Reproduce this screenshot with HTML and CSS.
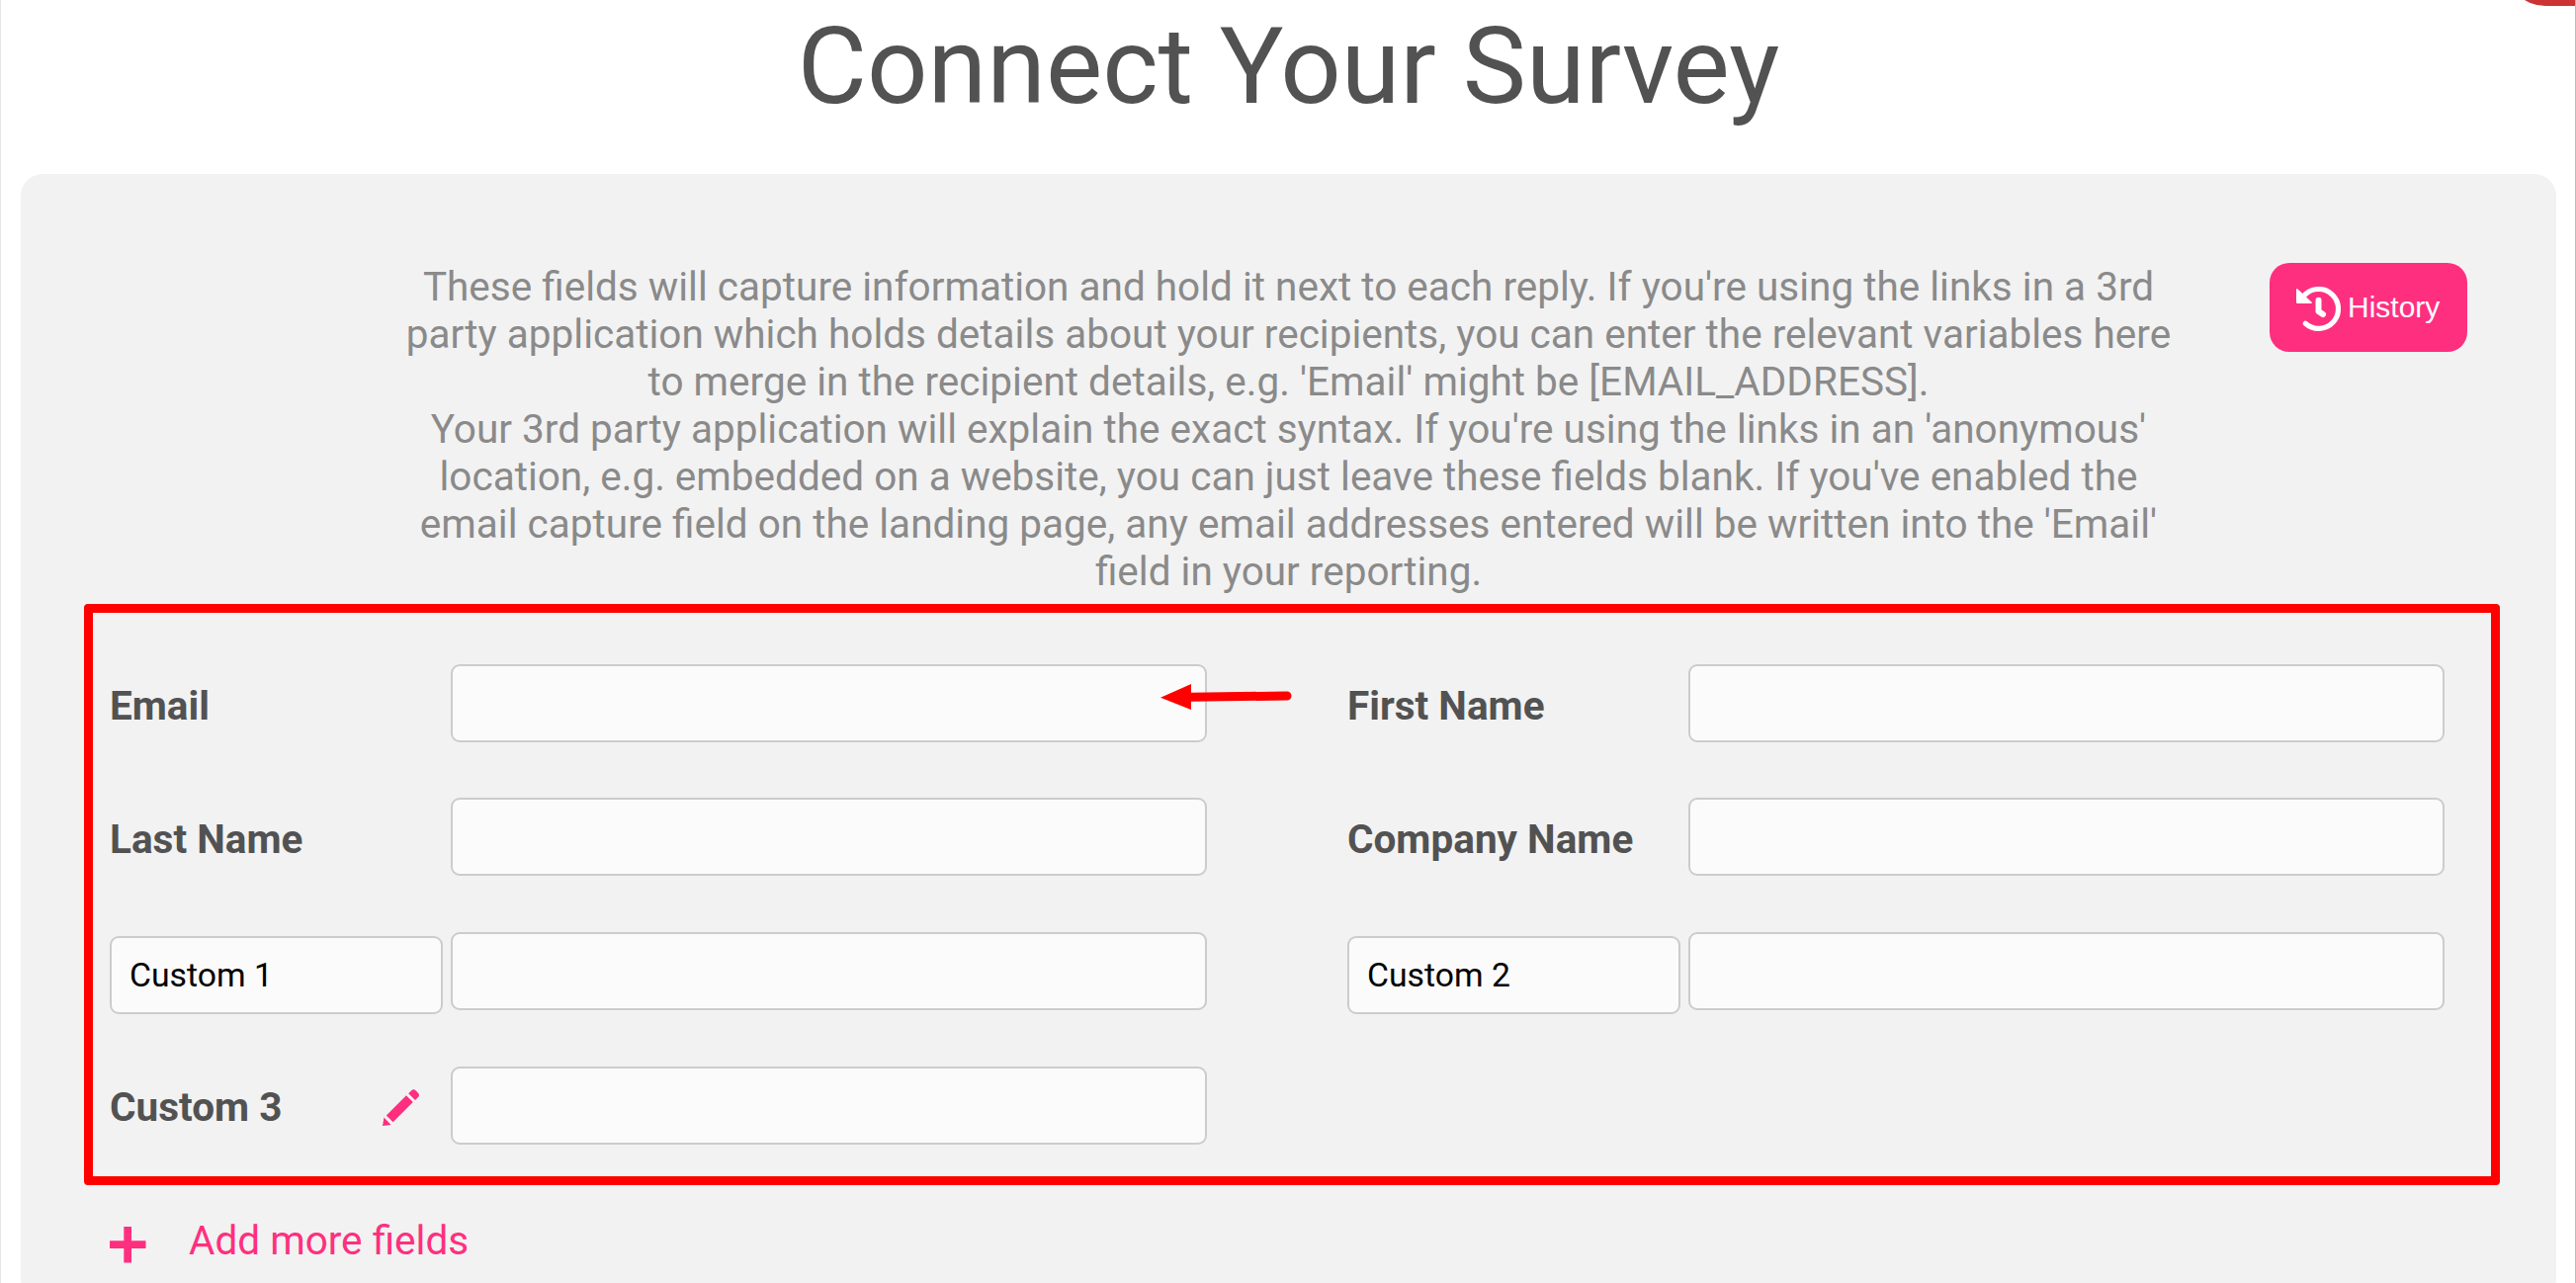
FILE: index.html
```html
<!DOCTYPE html>
<html lang="en">
<head>
<meta charset="utf-8">
<title>Connect Your Survey</title>
<link rel="stylesheet" href="styles.css">
</head>
<body>
<main class="page">
  <div class="corner-badge"></div>
  <h1 class="title">Connect Your Survey</h1>
  <section class="panel">
    <div class="intro">
      <p class="intro-text">These fields will capture information and hold it next to each reply. If you're using the links in a 3rd<br>party application which holds details about your recipients, you can enter the relevant variables here<br>to merge in the recipient details, e.g. 'Email' might be [EMAIL_ADDRESS].<br>Your 3rd party application will explain the exact syntax. If you're using the links in an 'anonymous'<br>location, e.g. embedded on a website, you can just leave these fields blank. If you've enabled the<br>email capture field on the landing page, any email addresses entered will be written into the 'Email'<br>field in your reporting.</p>
      <button class="history" type="button">
        <svg class="history-icon" viewBox="0 0 45 45"><path class="ring" d="M8.5 8.4A19.9 19.9 0 1 1 9.3 37.2"/><path class="head" d="M0 3.2Q0 1.2 1.5 2.6L15.4 15.6Q16.8 17 14.8 17H1.2Q0 17 0 15.8Z"/><path class="hand" d="M22.5 13.8V25L27 28"/></svg>
        <span>History</span>
      </button>
    </div>
    <form class="fields">
      <div class="field"><label class="label" for="f1">Email</label><input class="input" id="f1"></div>
      <div class="field"><label class="label" for="f2">First Name</label><input class="input" id="f2"></div>
      <div class="field"><label class="label" for="f3">Last Name</label><input class="input" id="f3"></div>
      <div class="field"><label class="label" for="f4">Company Name</label><input class="input" id="f4"></div>
      <div class="field"><input class="input name" value="Custom 1"><input class="input"></div>
      <div class="field"><input class="input name" value="Custom 2"><input class="input"></div>
      <div class="field">
        <label class="label" for="f7">Custom 3
          <svg class="pencil" viewBox="0 0 37 37"><path d="M0 37 1.5 28.5 8.5 36ZM3.8 26.4 24 6.2 30.8 13 10.6 33.2ZM26.2 4.2 29 1.4Q31.4-1 33.8 1.4L35.8 3.4Q38.2 5.8 35.8 8.2L33 11Z"/></svg>
        </label><input class="input" id="f7">
      </div>
    </form>
    <a class="add"><svg class="plus" viewBox="0 0 37 37"><path d="M14.3 0H22V14.3H36.5V22H22V36.5H14.3V22H0V14.3H14.3Z"/></svg><span>Add more fields</span></a>
  </section>
  <div class="highlight"></div>
  <svg class="arrow" viewBox="0 0 134 28"><path class="shaft" d="M30 14.2 128 13"/><path class="tip" d="M0 14.8 31 1V27Z"/></svg>
</main>
</body>
</html>
```
FILE: styles.css
```css
* { box-sizing: border-box; }

body {
  margin: 0;
  background: #fff;
  font-family: Roboto, "Liberation Sans", sans-serif;
  font-size: 40.5px;
  color: #525252;
}

.page {
  position: relative;
  height: 1298px;
  padding: 2px 19px 0 20px;
  overflow: hidden;
  border-left: 1px solid #e6e6e6;
  border-right: 1px solid #bbb;
}

.corner-badge {
  position: absolute;
  top: -94px;
  right: -60px;
  width: 130px;
  height: 100px;
  border-radius: 40px;
  background: #cc3333;
}

.title {
  margin: 0;
  height: 174px;
  font-size: 108px;
  font-weight: 400;
  line-height: 130px;
  text-align: center;
}

.panel {
  height: 1140px;
  padding: 90px 90px 0;
  border-radius: 22px;
  background: #f2f2f2;
}

.intro {
  display: flex;
  justify-content: flex-end;
  align-items: flex-start;
  gap: 90px;
}

.intro-text {
  flex: 1;
  margin: 0 0 0 290px;
  line-height: 48px;
  text-align: center;
  white-space: nowrap;
  color: #8a8a8a;
}

.history {
  display: flex;
  align-items: center;
  gap: 7px;
  width: 200px;
  height: 90px;
  padding: 0 0 0 27px;
  border: 0;
  border-radius: 20px;
  background: #ff2f7f;
  color: #fff;
  font: 30px "Liberation Sans", Arial, sans-serif;
}

.history-icon { width: 45px; height: 45px; margin-top: 2px; fill: #fff; }
.history-icon .ring { fill: none; stroke: #fff; stroke-width: 5.2; stroke-linecap: round; }
.history-icon .hand { fill: none; stroke: #fff; stroke-width: 6; stroke-linecap: round; stroke-linejoin: round; }

.fields {
  display: grid;
  grid-template-columns: 1110px 1110px;
  grid-auto-rows: 79px;
  gap: 56.6px 142px;
  margin-top: 69.8px;
}

.field {
  display: flex;
  justify-content: space-between;
}

.label {
  display: flex;
  justify-content: space-between;
  align-items: center;
  width: 313px;
  padding-top: 4.6px;
  font-weight: 700;
  white-space: nowrap;
}

.input {
  width: 765px;
  height: 79px;
  padding: 0 18px;
  border: 2px solid #ccc;
  border-radius: 9px;
  background: #fbfbfb;
  font: 33.75px Roboto, "Liberation Sans", sans-serif;
  color: #000;
}

.input.name {
  width: 337px;
  margin-top: 4px;
}

.pencil { width: 37px; height: 37px; fill: #ff2f7f; }

.add {
  display: flex;
  align-items: center;
  gap: 43px;
  margin-top: 73px;
  color: #ff2f7f;
}

.plus { width: 37px; height: 37px; margin-top: 10px; fill: #ff2f7f; }

.highlight {
  position: absolute;
  left: 84px;
  top: 611px;
  width: 2444px;
  height: 588px;
  border: 9px solid #f00;
  border-radius: 4px;
}

.arrow {
  position: absolute;
  left: 1173px;
  top: 691px;
  width: 134px;
  height: 28px;
}

.arrow .shaft { stroke: #f00; stroke-width: 9; stroke-linecap: round; }
.arrow .tip { fill: #f00; }
```
